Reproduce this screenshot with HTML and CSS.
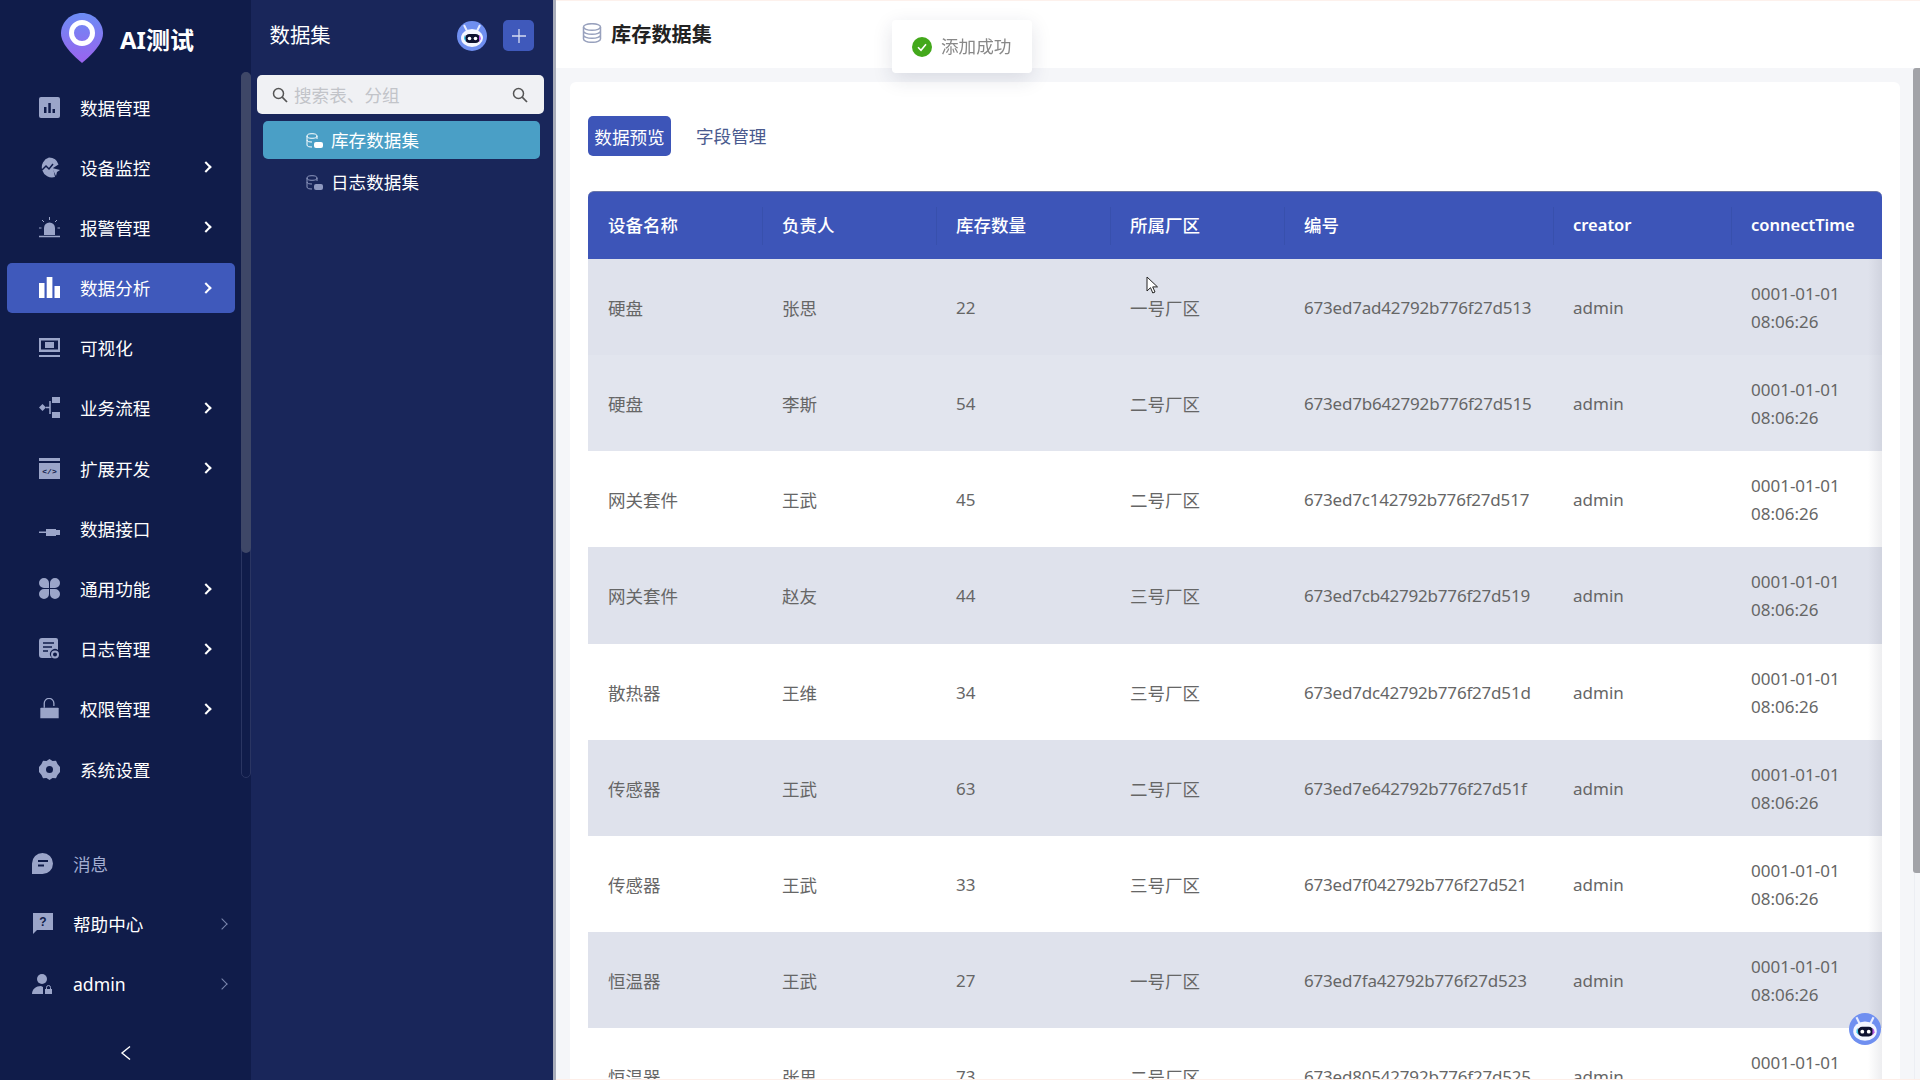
FILE: index.html
```html
<!DOCTYPE html>
<html lang="zh-CN">
<head>
<meta charset="utf-8">
<title>库存数据集</title>
<link rel="stylesheet" href="styles.css">
</head>
<body>
<div class="app">
  <aside class="nav">
    <div class="brand">
      <svg class="brand-logo" width="42" height="50" viewBox="0 0 42 50"><defs><linearGradient id="pin" x1="0" y1="0" x2="0" y2="1"><stop offset="0" stop-color="#6c8cf5"/><stop offset="1" stop-color="#9a63ee"/></linearGradient></defs><path d="M21 0C9.500 0 0 9 0 20.500 0 32 14 44 21 50 28 44 42 32 42 20.500 42 9 32.500 0 21 0Z" fill="url(#pin)"/><circle cx="21" cy="20" r="10.500" fill="none" stroke="#fff" stroke-width="5"/></svg>
      <span class="brand-name">AI测试</span>
    </div>
    <ul class="menu">
      <li class="menu-item"><svg class="mi" viewBox="0 0 21 21"><rect width="21" height="21" rx="2" fill="#9ba5c9"/><path d="M5 10h2.500v6H5zM9.300 6h2.500v10H9.300zM13.500 12H16v4h-2.500z" fill="#101c4a"/></svg><span class="ml">数据管理</span></li>
      <li class="menu-item"><svg class="mi" viewBox="0 0 21 21"><path d="M10 .5a10 10 0 0 1 9.500 7L14 11l2 9a10 10 0 1 1-6-19.500Z" fill="#9ba5c9"/><path d="M3 13l4-4 3 3 4-5" fill="none" stroke="#101c4a" stroke-width="1.500"/><path d="M13 11l8 2-3 2-1 4z" fill="#9ba5c9"/></svg><span class="ml">设备监控</span><i class="chev"></i></li>
      <li class="menu-item"><svg class="mi" viewBox="0 0 21 21"><path d="M5 18v-7a5.500 5.500 0 0 1 11 0v7z" fill="#9ba5c9"/><path d="M0 19.500h21" stroke="#9ba5c9" stroke-width="1.500"/><path d="M10.500 0v3M3 3l2 2M18 3l-2 2M0 11h2.500M18.500 11H21" stroke="#9ba5c9"/></svg><span class="ml">报警管理</span><i class="chev"></i></li>
      <li class="menu-item active"><svg class="mi" viewBox="0 0 21 21"><path d="M0 6h5.500v15H0zM7.700 0h5.700v21H7.700zM15.500 9H21v12h-5.500z" fill="#fff"/></svg><span class="ml">数据分析</span><i class="chev"></i></li>
      <li class="menu-item"><svg class="mi" viewBox="0 0 21 21"><path d="M0 1h21v14H0z" fill="#9ba5c9"/><path d="M2 3.500h17v9H2z" fill="#101c4a"/><path d="M6 5h9v6H6z" fill="#9ba5c9"/><path d="M0 19h21" stroke="#9ba5c9" stroke-width="2"/></svg><span class="ml">可视化</span></li>
      <li class="menu-item"><svg class="mi" viewBox="0 0 21 21"><path d="M0 10.500l3.500-3.500 3.500 3.500-3.500 3.500z" fill="#9ba5c9"/><path d="M7 10.500h4M11 4v13" stroke="#9ba5c9" stroke-width="1.500" fill="none"/><path d="M13 0h8v6h-8zM13 15h8v6h-8z" fill="#9ba5c9"/></svg><span class="ml">业务流程</span><i class="chev"></i></li>
      <li class="menu-item"><svg class="mi" viewBox="0 0 21 21"><path d="M0 0h21v3H0zM0 5h21v16H0z" fill="#9ba5c9"/><text class="code-mark" x="10.500" y="16" text-anchor="middle">&lt;/&gt;</text></svg><span class="ml">扩展开发</span><i class="chev"></i></li>
      <li class="menu-item"><svg class="mi" viewBox="0 0 21 21"><path d="M0 13.500h7V15H0zM7 11h10v7H7zM17 12h4v5h-4z" fill="#9ba5c9"/></svg><span class="ml">数据接口</span></li>
      <li class="menu-item"><svg class="mi" viewBox="0 0 21 21"><path d="M5 0a5 5 0 0 1 5 5v5H5A5 5 0 0 1 5 0ZM16 0a5 5 0 0 1 0 10h-5V5a5 5 0 0 1 5-5ZM5 11h5v5a5 5 0 1 1-5-5ZM11 11h5a5 5 0 1 1-5 5Z" fill="#9ba5c9"/></svg><span class="ml">通用功能</span><i class="chev"></i></li>
      <li class="menu-item"><svg class="mi" viewBox="0 0 21 21"><path d="M3 0h14a2 2 0 0 1 2 2v10a5 5 0 0 0-7 7l1 1H3a3 3 0 0 1-3-3V3a3 3 0 0 1 3-3Z" fill="#9ba5c9"/><path d="M4 5h11M4 9h9M4 13h5" stroke="#101c4a" stroke-width="1.500"/><circle cx="16" cy="16.500" r="3" fill="none" stroke="#9ba5c9" stroke-width="2"/></svg><span class="ml">日志管理</span><i class="chev"></i></li>
      <li class="menu-item"><svg class="mi" viewBox="0 0 21 24"><path d="M4.500 11V6a5.500 5.500 0 0 1 11 0v3" fill="none" stroke="#9ba5c9" stroke-width="1.500"/><path d="M1 11h19a1 1 0 0 1 1 1v11H0V12a1 1 0 0 1 1-1Z" fill="#9ba5c9"/></svg><span class="ml">权限管理</span><i class="chev"></i></li>
      <li class="menu-item"><svg class="mi" viewBox="0 0 21 21"><path d="M10.500 0l3 2 3.500-.2 1.500 3.200 2.500 3v5l-2.500 3-1.500 3.200-3.500-.2-3 2-3-2-3.500.2L2.500 16 0 13V8l2.500-3L4 1.800 7.500 2z" fill="#9ba5c9"/><circle cx="10.500" cy="10.500" r="3.500" fill="#101c4a"/></svg><span class="ml">系统设置</span></li>
    </ul>
    <ul class="foot">
      <li class="foot-item"><svg class="mi" viewBox="0 0 21 21"><path d="M10.500 0a10.500 10.500 0 0 1 0 21H0V10.500A10.500 10.500 0 0 1 10.500 0Z" fill="#9ba5c9"/><path d="M6 8h10M6 12.500h6" stroke="#101c4a" stroke-width="2"/></svg><span class="ml muted">消息</span></li>
      <li class="foot-item"><svg class="mi" viewBox="0 0 21 21"><path d="M1 0h20v17H5l-4 4z" fill="#9ba5c9"/><text class="q-mark" x="11" y="13" text-anchor="middle">?</text></svg><span class="ml">帮助中心</span><i class="chev dim"></i></li>
      <li class="foot-item"><svg class="mi" viewBox="0 0 21 21"><circle cx="10" cy="5" r="5" fill="#9ba5c9"/><path d="M0 20c0-5 4-8 9-8l2 1v7z" fill="#9ba5c9"/><path d="M13 15h7v5h-7z" fill="#9ba5c9"/><path d="M14.500 15v-1.500a2 2 0 0 1 4 0V15" fill="none" stroke="#9ba5c9"/></svg><span class="ml">admin</span><i class="chev dim"></i></li>
    </ul>
    <div class="collapse"><svg width="12" height="16" viewBox="0 0 12 16"><path d="M10 1.500L2 8l8 6.500" fill="none" stroke="#fff" stroke-width="1.400"/></svg></div>
    <div class="nav-track"><div class="nav-thumb"></div></div>
  </aside>

  <aside class="sets">
    <div class="sets-head">
      <span class="sets-title">数据集</span>
      <svg class="robot" width="30" height="30" viewBox="0 0 30 30"><use href="#robot-shape"/></svg>
      <span class="add"><svg width="14" height="14" viewBox="0 0 14 14"><path d="M7 0v14M0 7h14" stroke="#d6dcf2" stroke-width="1.300"/></svg></span>
    </div>
    <div class="search">
      <svg width="16" height="16" viewBox="0 0 16 16"><circle cx="6.500" cy="6.500" r="5" fill="none" stroke="#555" stroke-width="1.500"/><path d="M10.200 10.200L15 15" stroke="#555" stroke-width="1.700"/></svg>
      <span class="search-text">搜索表、分组</span>
      <svg width="16" height="16" viewBox="0 0 16 16"><circle cx="6.500" cy="6.500" r="5" fill="none" stroke="#555" stroke-width="1.500"/><path d="M10.200 10.200L15 15" stroke="#555" stroke-width="1.700"/></svg>
    </div>
    <ul class="set-list">
      <li class="set-item on"><svg class="set-ic" viewBox="0 0 17 15"><ellipse cx="6" cy="3" rx="5" ry="2.300" fill="none" stroke="#fff"/><path d="M1 3v9c0 1.500 2 2 5 2M11 3v3M1 7c0 1.500 2 2 5 2" fill="none" stroke="#fff"/><rect x="8" y="9" width="9" height="6" rx="2" fill="#fff"/></svg><span>库存数据集</span></li>
      <li class="set-item"><svg class="set-ic" viewBox="0 0 17 15"><ellipse cx="6" cy="3" rx="5" ry="2.300" fill="none" stroke="#8e98bf"/><path d="M1 3v9c0 1.500 2 2 5 2M11 3v3M1 7c0 1.500 2 2 5 2" fill="none" stroke="#8e98bf"/><rect x="8" y="9" width="9" height="6" rx="2" fill="#8e98bf"/></svg><span>日志数据集</span></li>
    </ul>
  </aside>

  <main class="main">
    <header class="top">
      <svg width="20" height="20" viewBox="0 0 20 20"><ellipse cx="10" cy="4" rx="8.500" ry="3.300" fill="none" stroke="#98a1bd" stroke-width="1.500"/><path d="M1.500 4v12c0 1.800 3.800 3.300 8.500 3.300s8.500-1.500 8.500-3.300V4M1.500 8c0 1.800 3.800 3.300 8.500 3.300S18.500 9.800 18.500 8M1.500 12c0 1.800 3.800 3.300 8.500 3.300s8.500-1.500 8.500-3.300" fill="none" stroke="#98a1bd" stroke-width="1.500"/></svg>
      <h1 class="top-title">库存数据集</h1>
    </header>
    <section class="card">
      <div class="tabs"><span class="tab on">数据预览</span><span class="tab">字段管理</span></div>
      <div class="table">
        <div class="row head"><span>设备名称</span><span>负责人</span><span>库存数量</span><span>所属厂区</span><span>编号</span><span class="latin">creator</span><span class="latin">connectTime</span></div>
        <div class="row grey"><span>硬盘</span><span>张思</span><span>22</span><span>一号厂区</span><span>673ed7ad42792b776f27d513</span><span>admin</span><span>0001-01-01 08:06:26</span></div>
        <div class="row grey2"><span>硬盘</span><span>李斯</span><span>54</span><span>二号厂区</span><span>673ed7b642792b776f27d515</span><span>admin</span><span>0001-01-01 08:06:26</span></div>
        <div class="row"><span>网关套件</span><span>王武</span><span>45</span><span>二号厂区</span><span>673ed7c142792b776f27d517</span><span>admin</span><span>0001-01-01 08:06:26</span></div>
        <div class="row grey"><span>网关套件</span><span>赵友</span><span>44</span><span>三号厂区</span><span>673ed7cb42792b776f27d519</span><span>admin</span><span>0001-01-01 08:06:26</span></div>
        <div class="row"><span>散热器</span><span>王维</span><span>34</span><span>三号厂区</span><span>673ed7dc42792b776f27d51d</span><span>admin</span><span>0001-01-01 08:06:26</span></div>
        <div class="row grey"><span>传感器</span><span>王武</span><span>63</span><span>二号厂区</span><span>673ed7e642792b776f27d51f</span><span>admin</span><span>0001-01-01 08:06:26</span></div>
        <div class="row"><span>传感器</span><span>王武</span><span>33</span><span>三号厂区</span><span>673ed7f042792b776f27d521</span><span>admin</span><span>0001-01-01 08:06:26</span></div>
        <div class="row grey"><span>恒温器</span><span>王武</span><span>27</span><span>一号厂区</span><span>673ed7fa42792b776f27d523</span><span>admin</span><span>0001-01-01 08:06:26</span></div>
        <div class="row"><span>恒温器</span><span>张思</span><span>73</span><span>二号厂区</span><span>673ed80542792b776f27d525</span><span>admin</span><span>0001-01-01 08:06:26</span></div>
      </div>
    </section>
    <div class="page-track"></div>
    <div class="page-thumb"></div>
  </main>
</div>

<div class="toast">
  <svg width="20" height="20" viewBox="0 0 20 20"><circle cx="10" cy="10" r="10" fill="#43a81b"/><path d="M6 10.200l3 3 5-6" fill="none" stroke="#fff" stroke-width="1.600"/></svg>
  <span class="toast-text">添加成功</span>
</div>

<svg class="float-robot" width="32" height="32" viewBox="0 0 30 30"><defs><g id="robot-shape"><circle cx="15" cy="15" r="15" fill="#6f8ff0"/><path d="M7 4l3 6M23 4l-3 6" stroke="#e8edff" stroke-width="2"/><ellipse cx="15" cy="17" rx="11" ry="9" fill="#f3f6ff"/><rect x="8" y="13" width="15" height="9" rx="4.500" fill="#0d1230"/><circle cx="12.500" cy="17.500" r="1.800" fill="#fff"/><circle cx="18.500" cy="17.500" r="1.800" fill="#fff"/><path d="M22 14a5 5 0 0 1 2 4l-2 3z" fill="#b45be8"/><path d="M8 14a5 5 0 0 0-1 4l2 3z" fill="#3ac5e8"/></g></defs><use href="#robot-shape"/></svg>

<svg class="cursor" width="13" height="19" viewBox="0 0 13 19"><path d="M1 1v14l3.500-3.300 2.300 5.300 2.200-1-2.300-5.100H11.500z" fill="#fff" stroke="#222" stroke-width="1"/></svg>
</body>
</html>
```
FILE: styles.css
```css
* { box-sizing: border-box; }
html, body { margin: 0; height: 100%; overflow: hidden; }
body { font-family: "Noto Sans", "Noto Sans CJK SC", sans-serif; background: #f5f6f9; color: #666; }
ul { list-style: none; margin: 0; padding: 0; }
.app { display: flex; height: 1080px; overflow: hidden; }

/* primary nav */
.nav { position: relative; width: 251px; flex: none; background: #101c4a; color: #fff; display: flex; flex-direction: column; }
.brand { height: 72px; display: flex; align-items: center; padding: 0 0 0 61px; gap: 17px; }
.brand-logo { margin-top: 4px; }
.brand-name { font-size: 24px; font-weight: 700; margin-top: 4px; }
.menu { display: flex; flex-direction: column; gap: 10.2px; padding: 10px 16px 0 7px; }
.menu-item { position: relative; height: 50px; display: flex; align-items: center; padding-left: 32px; border-radius: 5px; font-size: 17.6px; }
.menu-item.active { background: #3f59bb; }
.mi { width: 21px; height: 21px; flex: none; }
.ml { margin-left: 20px; }
.muted { color: #a3add0; }
.chev { position: absolute; right: 25.5px; top: 50%; width: 8px; height: 8px; margin-top: -4px; border-top: 2px solid #fff; border-right: 2px solid #fff; transform: rotate(45deg); }
.foot { display: flex; flex-direction: column; gap: 10.5px; margin-top: 44px; }
.foot-item { position: relative; height: 50px; display: flex; align-items: center; padding-left: 32px; font-size: 17.6px; }
.chev.dim { right: 25px; border-color: #7a86ad; border-width: 1.5px; }
.collapse { display: flex; justify-content: center; margin-top: 36px; }
.nav-track { position: absolute; left: 241px; top: 72px; width: 10px; height: 706px; border: 1px solid #2a3562; border-radius: 5px; }
.nav-thumb { height: 481px; margin: -1px; background: #3e4767; border-radius: 5px; }
.code-mark { font: 700 8px "Liberation Mono", monospace; fill: #101c4a; }
.q-mark { font: 700 12px "Liberation Sans", sans-serif; fill: #101c4a; }

/* data set column */
.sets { width: 302px; flex: none; background: #19265a; color: #fff; }
.sets-head { height: 75px; display: flex; align-items: center; padding: 0 19px 0 18.5px; }
.sets-title { font-size: 20.4px; flex: 1; margin-top: -7px; }
.robot { margin: -4px 16px 0 0; }
.add { width: 31px; height: 31px; margin-top: -4px; border-radius: 5px; background: #3f59bb; display: flex; align-items: center; justify-content: center; }
.search { width: 287px; height: 39px; margin-left: 6px; padding: 0 16px 0 15px; display: flex; align-items: center; gap: 6px; background: #f0f1f4; border-radius: 5px; color: #c2c4c9; font-size: 17.6px; }
.search-text { flex: 1; }
.set-list { padding: 7px 13px 0 12px; display: flex; flex-direction: column; gap: 4px; }
.set-item { height: 38px; display: flex; align-items: center; padding-left: 43px; gap: 8px; font-size: 17.6px; border-radius: 5px; }
.set-item span { position: relative; top: -1px; }
.set-item.on { background: #4a9fc6; }
.set-ic { width: 17px; height: 15px; flex: none; }

/* main area */
.main { position: relative; flex: 1; min-width: 0; border-left: 3px solid #a9adba; }
.main::after { content: ""; position: absolute; left: 0; right: 0; bottom: 0; height: 1px; background: #fdeee8; }
.top { height: 68px; background: #fff; border-top: 1px solid #fdf1ec; display: flex; align-items: center; gap: 9px; padding: 0 0 0 26px; }
.top svg { margin-top: -4px; }
.top-title { margin: 0; font-size: 20.2px; font-weight: 700; color: #222; position: relative; top: -1px; }
.card { margin: 14px 20px 0 14px; padding: 34px 0 0 18px; background: #fff; border-radius: 6px; height: 1100px; }
.tabs { display: flex; gap: 25px; align-items: center; height: 40px; font-size: 17.6px; color: #4a5a8e; }
.tab { line-height: 42px; }
.tab.on { width: 83px; height: 40px; text-align: center; color: #fff; background: #3d55b8; border-radius: 5px; }
.table { position: relative; width: 1294px; margin-top: 35px; font-size: 17px; line-height: 28px; }
.table::after { content: ""; position: absolute; right: 0; top: 68px; bottom: 0; width: 14px; background: linear-gradient(to right, rgba(60, 65, 90, 0), rgba(60, 65, 90, .09)); }
.row { display: grid; grid-template-columns: 174px 174px 174px 174px 269px 178px 151px; height: 96.14px; align-items: center; background: #fff; }
.row > span { position: relative; top: 1px; padding-left: 20px; padding-right: 20px; }
.row > span:nth-child(-n+4) { font-size: 17.5px; }
.row > span:nth-child(3) { font-size: 17px; }
.row > span:nth-child(5) { letter-spacing: -.2px; }
.row > span:last-child { padding-right: 14px; }
.row.head { height: 68px; background: #3d55b8; color: #fff; font-weight: 500; border-top: 1px solid #6a76a6; border-radius: 6px 6px 0 0; }
.row.head > span { top: 0; font-size: 17.5px; letter-spacing: 0; height: 38px; line-height: 36px; border-left: 1px solid #3850ad; padding-left: 19px; }
.row.head > span:first-child { border-left: 0; padding-left: 20px; }
.row.head > .latin { font-size: 16.5px; font-weight: 600; }
.row.grey { background: #dfe2ec; }
.row.grey2 { background: #e2e5ee; }
.page-track { position: absolute; right: 0; top: 68px; bottom: 0; width: 6px; border-left: 1px solid #eceef3; }
.page-thumb { position: absolute; right: 0; top: 68px; width: 7px; height: 805px; background: #a2a3a8; border-radius: 3px 0 0 3px; }

/* overlays */
.toast { position: fixed; left: 892px; top: 20px; width: 140px; height: 53px; display: flex; align-items: center; gap: 9px; padding-left: 20px; background: #fff; border-radius: 4px; box-shadow: 0 6px 20px rgba(30, 40, 80, .13); color: #888; font-size: 17.6px; }
.toast-text { position: relative; top: -1px; }
.float-robot { position: fixed; left: 1849px; top: 1013px; }
.cursor { position: fixed; left: 1146px; top: 276px; }
```
